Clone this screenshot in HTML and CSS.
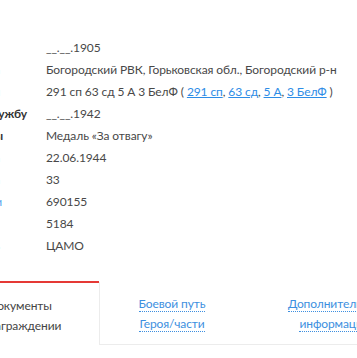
FILE: index.html
```html
<!DOCTYPE html>
<html lang="ru">
<head>
<meta charset="utf-8">
<link rel="stylesheet" href="styles.css">
</head>
<body>
<div class="page">
  <div class="info">
    <div class="row"><div class="lbl lbl-off">Дата рождения</div><div class="val">__.__.1905</div></div>
    <div class="row"><div class="lbl lbl-off">Место призыва</div><div class="val">Богородский РВК, Горьковская обл., Богородский р-н</div></div>
    <div class="row"><div class="lbl lbl-off">Место службы</div><div class="val">291 сп 63 сд 5 А 3 БелФ ( <a href="#">291 сп</a>, <a href="#">63 сд</a>, <a href="#">5 А</a>, <a href="#">3 БелФ</a> )</div></div>
    <div class="row"><div class="lbl lbl-a">Дата поступления на службу</div><div class="val">__.__.1942</div></div>
    <div class="row"><div class="lbl lbl-b">Наименование награды</div><div class="val">Медаль «За отвагу»</div></div>
    <div class="row"><div class="lbl lbl-off">Дата документа</div><div class="val">22.06.1944</div></div>
    <div class="row"><div class="lbl lbl-off">Номер фонда</div><div class="val">33</div></div>
    <div class="row"><div class="lbl lbl-c"><span class="link-lbl">Номер описи</span></div><div class="val">690155</div></div>
    <div class="row"><div class="lbl lbl-off">Номер дела</div><div class="val">5184</div></div>
    <div class="row"><div class="lbl lbl-off">Архив</div><div class="val">ЦАМО</div></div>
  </div>
  <div class="tabs">
    <div class="tab tab-active">Документы<br>о награждении</div>
    <div class="tab-rest">
      <div class="tab tab-2"><span class="dot">Боевой путь</span><br><span class="dot">Героя/части</span></div>
      <div class="tab tab-3"><span class="dot">Дополнительная</span><br><span class="dot">информация</span></div>
    </div>
  </div>
</div>
</body>
</html>
```

FILE: styles.css
```css
html, body {
  margin: 0;
  padding: 0;
  background: #fff;
  overflow: hidden;
}
body {
  font-family: Lato, "Noto Sans", sans-serif;
  font-size: 12px;
  letter-spacing: -0.1px;
  color: #484848;
}
.page {
  width: 357px;
  height: 358px;
  overflow: hidden;
  padding-top: 37px;
  box-sizing: border-box;
}
.row {
  display: grid;
  grid-template-columns: 46px 1fr;
  height: 22px;
  line-height: 22px;
}
.lbl {
  overflow: hidden;
  white-space: nowrap;
  display: flex;
  justify-content: flex-end;
  font-weight: bold;
  color: #333;
}
.lbl-off { padding-right: 46px; }
.lbl-a { padding-right: 19px; }
.lbl-b { padding-right: 43px; }
.lbl-c { padding-right: 44px; }
.link-lbl { color: #5aa7ef; font-weight: normal; }
.val {
  white-space: nowrap;
}
.val a {
  color: #2d8ce6;
  text-decoration: underline;
}
.tabs {
  display: flex;
  margin-top: 24px;
  margin-left: -59px;
  line-height: 20px;
}
.tab {
  flex-shrink: 0;
  text-align: center;
  padding: 13px 0 11px;
}
.tab-active {
  width: 158px;
  border-top: 2px solid #e53935;
  color: #444;
}
.tab-rest {
  flex-shrink: 0;
  display: flex;
  border-left: 1px solid #ececec;
  border-bottom: 1px solid #ececec;
  margin-top: 1px;
  height: 63px;
  box-sizing: border-box;
}
.tab-2 { width: 144px; padding-top: 12px; }
.tab-3 { width: 180px; padding-top: 12px; }
.dot {
  color: #3d8fe0;
  border-bottom: 1px dotted #3d8fe0;
}
```
